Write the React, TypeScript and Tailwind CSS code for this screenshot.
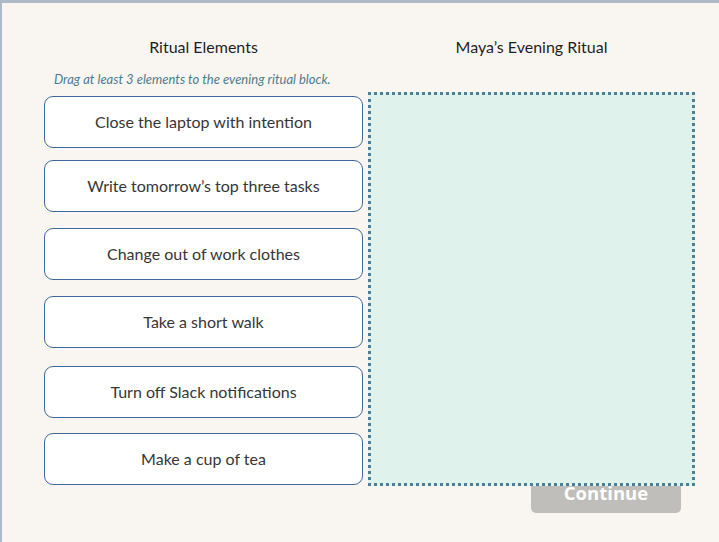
const ELEMENTS = [
  { label: "Close the laptop with intention", gap: "mt-[9px]" },
  { label: "Write tomorrow\u2019s top three tasks", gap: "mt-[12px]" },
  { label: "Change out of work clothes", gap: "mt-[16px]" },
  { label: "Take a short walk", gap: "mt-[16px]" },
  { label: "Turn off Slack notifications", gap: "mt-[18px]" },
  { label: "Make a cup of tea", gap: "mt-[15px]" },
];

export default function App() {
  return (
    <div className="w-[719px] h-[542px] overflow-hidden bg-[#f9f6f2] border-t-[3px] border-l-2 border-[#adb9c4] font-['Lato','Noto_Sans',sans-serif]">
      <div className="flex pl-[42px] pt-[34px] gap-[5px]">
        {/* Left: ritual elements */}
        <div className="w-[319px] flex flex-col">
          <h2 className="h-[20px] text-center text-[16px] leading-[20px] text-[#1f1f1f]">
            Ritual Elements
          </h2>
          <p className="mt-[14px] pl-[10px] h-[16px] text-[13px] leading-[16px] italic text-[#4f7b8c]">
            Drag at least 3 elements to the evening ritual block.
          </p>
          {ELEMENTS.map((item) => (
            <div
              key={item.label}
              className={`${item.gap} h-[52px] flex items-center justify-center rounded-[9px] border border-[#41689a] bg-white text-[16px] text-[#363636]`}
            >
              {item.label}
            </div>
          ))}
        </div>

        {/* Right: drop zone */}
        <div className="w-[327px] flex flex-col">
          <h2 className="h-[20px] text-center text-[16px] leading-[20px] text-[#1f1f1f]">
            Maya’s Evening Ritual
          </h2>
          <div className="relative z-10 mt-[35px] h-[394px] border-[3px] border-dotted border-[#4d8096] bg-[#e0f2ec]" />
          <button className="-mt-[11px] self-end mr-[14px] w-[150px] h-[38px] rounded-[5px] bg-[#c0beba] text-white font-['Open_Sans',sans-serif] font-bold text-[18.5px] leading-[36px] pb-[2px]">
            Continue
          </button>
        </div>
      </div>
    </div>
  );
}
